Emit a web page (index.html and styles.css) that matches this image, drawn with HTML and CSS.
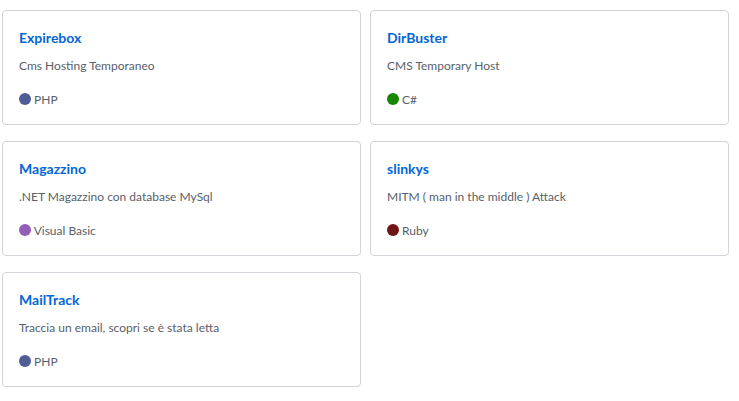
FILE: index.html
```html
<!DOCTYPE html>
<html lang="it">
<head>
<meta charset="utf-8">
<title>Pinned repositories</title>
<link rel="stylesheet" href="styles.css">
</head>
<body>
<ol class="pinned">
  <li class="card">
    <a class="repo" href="#">Expirebox</a>
    <p class="desc">Cms Hosting Temporaneo</p>
    <p class="meta"><span class="lang-dot php"></span> <span>PHP</span></p>
  </li>
  <li class="card">
    <a class="repo" href="#">DirBuster</a>
    <p class="desc">CMS Temporary Host</p>
    <p class="meta"><span class="lang-dot csharp"></span> <span>C#</span></p>
  </li>
  <li class="card">
    <a class="repo" href="#">Magazzino</a>
    <p class="desc">.NET Magazzino con database MySql</p>
    <p class="meta"><span class="lang-dot vb"></span> <span>Visual Basic</span></p>
  </li>
  <li class="card">
    <a class="repo" href="#">slinkys</a>
    <p class="desc">MITM ( man in the middle ) Attack</p>
    <p class="meta"><span class="lang-dot ruby"></span> <span>Ruby</span></p>
  </li>
  <li class="card">
    <a class="repo" href="#">MailTrack</a>
    <p class="desc">Traccia un email, scopri se è stata letta</p>
    <p class="meta"><span class="lang-dot php"></span> <span>PHP</span></p>
  </li>
</ol>
</body>
</html>
```
FILE: styles.css
```css
* { box-sizing: border-box; }
html, body { margin: 0; padding: 0; background: #ffffff; }
body {
  font-family: Lato, "Open Sans", "Liberation Sans", sans-serif;
  color: #586069;
}
.pinned {
  list-style: none;
  margin: 0;
  padding: 10px 0 0 2px;
  display: grid;
  grid-template-columns: 359px 359px;
  column-gap: 9px;
  row-gap: 16px;
}
.card {
  border: 1px solid #d1d5da;
  border-radius: 4px;
  padding: 16px;
  height: 115px;
  display: flex;
  flex-direction: column;
}
.repo {
  font-size: 14px;
  line-height: 21px;
  font-weight: 700;
  color: #0366d6;
  text-decoration: none;
}
.desc {
  margin: 9px 0 16px;
  font-size: 12px;
  line-height: 18px;
  color: #586069;
}
.meta {
  margin: 0;
  font-size: 12px;
  line-height: 18px;
  color: #586069;
}
.lang-dot {
  display: inline-block;
  width: 12px;
  height: 12px;
  border-radius: 50%;
  vertical-align: -1px;
}
.php { background: #4f5d95; }
.csharp { background: #178600; }
.vb { background: #945db7; }
.ruby { background: #701516; }
```
